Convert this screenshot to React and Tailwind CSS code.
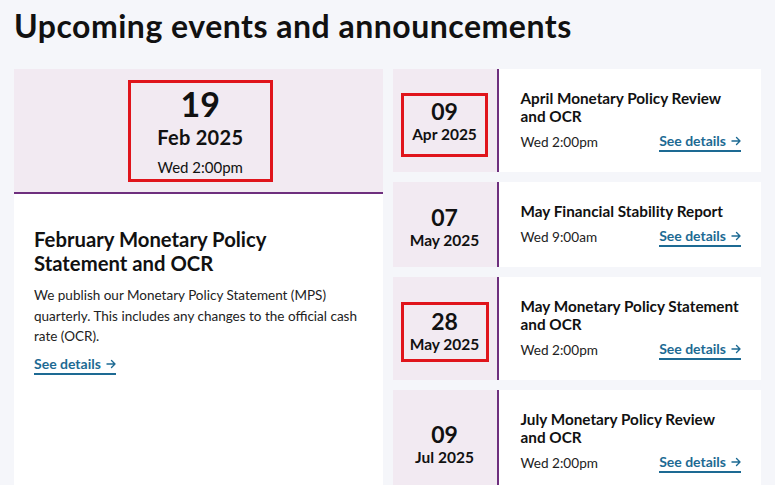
import React from 'react';

const events = [
    { day: '09', month: 'Apr 2025', title: 'April Monetary Policy Review and OCR', time: 'Wed 2:00pm', box: 'w-[87px] mt-[8px] pt-[2px] pb-[10px] border-[3px] border-[#e0141c]' },
    { day: '07', month: 'May 2025', title: 'May Financial Stability Report', time: 'Wed 9:00am', box: 'pt-[4px]' },
    { day: '28', month: 'May 2025', title: 'May Monetary Policy Statement and OCR', time: 'Wed 2:00pm', box: 'w-[88px] mt-[7px] pt-[3px] pb-[5px] border-[3px] border-[#e0141c]' },
    { day: '09', month: 'Jul 2025', title: 'July Monetary Policy Review and OCR', time: 'Wed 2:00pm', box: 'pt-[4px]' },
];

const Arrow = () => (
    <svg width="10" height="10" viewBox="0 0 10 10" fill="none" stroke="currentColor" strokeWidth="1.4" strokeLinecap="round" strokeLinejoin="round" className="ml-[5px]">
        <path d="M1 5h8M5.5 1.5L9 5 5.5 8.5" />
    </svg>
);

const SeeDetails = () => (
    <a href="#" className="inline-flex items-center text-[14px] font-bold leading-[16px] text-[#1d6a93] border-b-2 border-[#1d6a93] pb-[1px]">
        See details
        <Arrow />
    </a>
);

const EventRow = ({ event }) => (
    <div className="flex">
        <div className="w-[106px] shrink-0 bg-[#f2eaf2] border-r-2 border-[#6e2f7e] flex items-center justify-center">
            <div className={`flex flex-col items-center text-[#111] ${event.box}`}>
                <span className="text-[23px] font-bold leading-[26px]">{event.day}</span>
                <span className="text-[15.5px] font-bold leading-[20px]">{event.month}</span>
            </div>
        </div>
        <div className="flex-1 bg-white pl-[22px] pr-[20px] py-5">
            <h3 className="text-[15.3px] font-bold leading-[18px] text-[#111]">{event.title}</h3>
            <div className="mt-[7px] flex items-center justify-between">
                <span className="text-[13.6px] leading-5 text-[#222]">{event.time}</span>
                <SeeDetails />
            </div>
        </div>
    </div>
);

export default function App() {
    return (
        <div className="h-[485px] overflow-hidden bg-[#f5f6fa] px-[14px] pt-[7px]" style={{ fontFamily: 'Lato, "Open Sans", sans-serif' }}>
            <h1 className="text-[32px] font-bold leading-[37px] tracking-[0.5px] text-[#111]">Upcoming events and announcements</h1>
            <div className="mt-[25px] grid grid-cols-2 gap-[10px]">
                <div className="flex flex-col bg-white">
                    <div className="bg-[#f2eaf2] border-b-2 border-[#6e2f7e] pt-[11px] pb-[10px] flex justify-center">
                        <div className="w-[145px] ml-[4px] border-[3px] border-[#e0141c] pt-[2px] flex flex-col items-center text-[#111]">
                            <span className="text-[34px] font-bold leading-[38px]">19</span>
                            <span className="text-[20px] font-bold leading-[28px] tracking-[0.3px]">Feb 2025</span>
                            <span className="mt-1 text-[15px] leading-[24px]">Wed 2:00pm</span>
                        </div>
                    </div>
                    <div className="px-5 pt-[33px]">
                        <h2 className="text-[20.3px] font-bold leading-[24px] text-[#111]">February Monetary Policy<br />Statement and OCR</h2>
                        <p className="mt-[10px] text-[13.5px] leading-[20.5px] text-[#222]">
                            We publish our Monetary Policy Statement (MPS) quarterly. This includes any changes to the official cash rate (OCR).
                        </p>
                        <div className="mt-[4px]">
                            <SeeDetails />
                        </div>
                    </div>
                </div>
                <div className="flex flex-col gap-[10px]">
                    {events.map((event, i) => (
                        <EventRow key={i} event={event} />
                    ))}
                </div>
            </div>
        </div>
    );
}
